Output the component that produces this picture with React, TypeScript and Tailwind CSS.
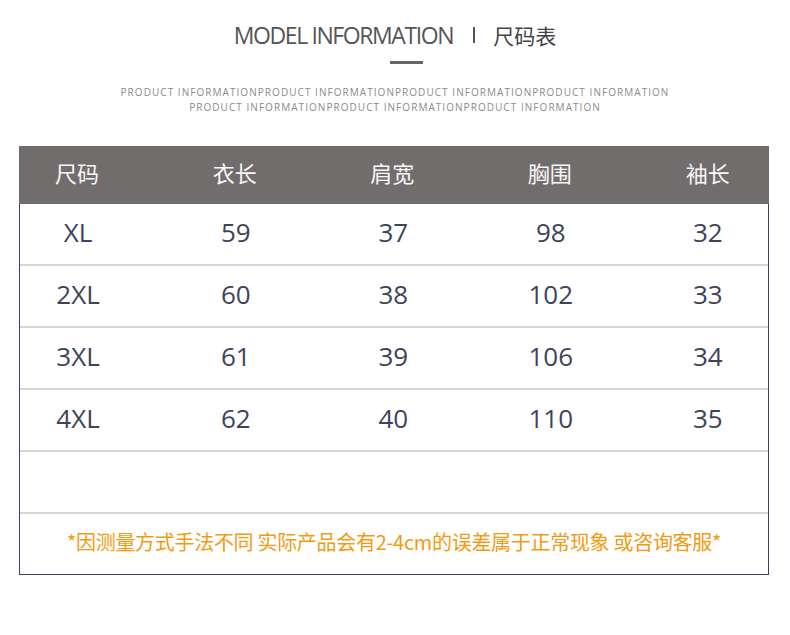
import React from 'react';

const rows = [
  ['XL', '59', '37', '98', '32'],
  ['2XL', '60', '38', '102', '33'],
  ['3XL', '61', '39', '106', '34'],
  ['4XL', '62', '40', '110', '35'],
];

const headers = ['尺码', '衣长', '肩宽', '胸围', '袖长'];

const cjk = { fontFamily: '"Noto Sans CJK SC", "Noto Sans", sans-serif' };
const num = { fontFamily: '"Open Sans", "Noto Sans CJK SC", sans-serif' };

// column boundaries follow the centres in the picture (77 / 235 / 392 / 550 / 707)
const grid = 'grid grid-cols-[137px_157.5px_157.5px_157.5px_1fr]';
const cellPad = ['pr-[21px]', '', '', '', 'pl-[18px]'];

const App: React.FC = () => {
  return (
    <div className="w-[790px] h-[635px] bg-white overflow-hidden">
      {/* Title */}
      <div className="pt-[22px] flex items-center justify-center h-[48px] text-[#555]">
        <span className="text-[23px] tracking-[-1.4px] leading-none" style={num}>
          MODEL INFORMATION
        </span>
        <span className="ml-[20px] mr-[18px] w-[2px] h-[16px] bg-[#555]" />
        <span className="text-[21px] leading-none text-[#444]" style={cjk}>
          尺码表
        </span>
      </div>
      <div className="flex justify-center pl-[23px] mt-[13px]">
        <div className="w-[33px] h-[3px] bg-[#666]" />
      </div>

      {/* Sub title */}
      <div className="mt-[21px] flex flex-col items-center text-[10px] leading-[15px] tracking-[1.05px] text-[#8a8a8a]" style={num}>
        <p>PRODUCT INFORMATIONPRODUCT INFORMATIONPRODUCT INFORMATIONPRODUCT INFORMATION</p>
        <p>PRODUCT INFORMATIONPRODUCT INFORMATIONPRODUCT INFORMATION</p>
      </div>

      {/* Table */}
      <div className="mt-[31px] ml-[19px] w-[750px]">
        <div className={`${grid} h-[58px] items-center pb-[6px] bg-[#726d6d] text-[#f7f7f7] text-[22px]`} style={cjk}>
          {headers.map((h, i) => (
            <div key={h} className={`text-center ${cellPad[i]}`}>{h}</div>
          ))}
        </div>
        <div className="border-x border-b border-[#3a4257]">
          {rows.map((r) => (
            <div key={r[0]} className={`${grid} h-[62px] items-center pb-[4px] border-b-2 border-[#d6d6d6] text-[26px] text-[#3d4459]`} style={num}>
              {r.map((c, i) => (
                <div key={i} className={`text-center ${cellPad[i]}`}>{c}</div>
              ))}
            </div>
          ))}
          <div className="h-[62px] border-b-2 border-[#d6d6d6]" />
          <div className="h-[60px] flex items-center justify-center pb-[4px] text-[20px] text-[#f39a12] tracking-[-0.3px]" style={cjk}>
            *因测量方式手法不同 实际产品会有2-4cm的误差属于正常现象 或咨询客服*
          </div>
        </div>
      </div>
    </div>
  );
};

export default App;
